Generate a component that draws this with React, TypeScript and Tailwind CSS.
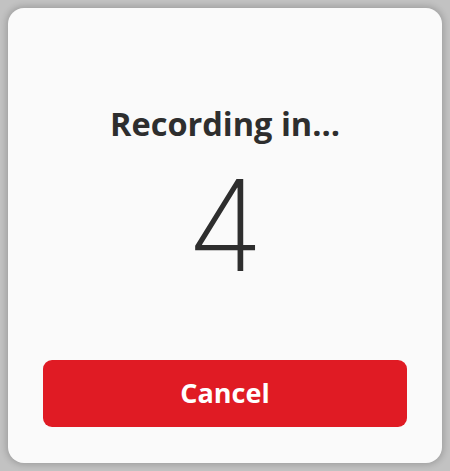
export default function App() {
  return (
    <div className="w-[450px] h-[471px] bg-[#c2c2c2] p-[8px] flex">
      <div className="flex-1 bg-[#fafafa] rounded-[16px] shadow-[0_0_6px_2px_rgba(0,0,0,0.18)] flex flex-col items-center px-[35px] pb-[36px]">
        <div className="mt-[96px] h-[40px] flex items-center text-[#2e2e2e] font-bold text-[32.5px] leading-none font-['Open_Sans',sans-serif]">
          Recording in…
        </div>
        <div className="mt-[31px] h-[100px] flex items-center text-[#2e2e2e] font-[250] text-[126px] leading-none font-['Inter',sans-serif]">
          4
        </div>
        <div className="flex-1" />
        <button className="w-full h-[67px] bg-[#e01b24] rounded-[9px] text-white font-bold text-[27px] flex items-center justify-center font-['Open_Sans',sans-serif]">
          Cancel
        </button>
      </div>
    </div>
  );
}
